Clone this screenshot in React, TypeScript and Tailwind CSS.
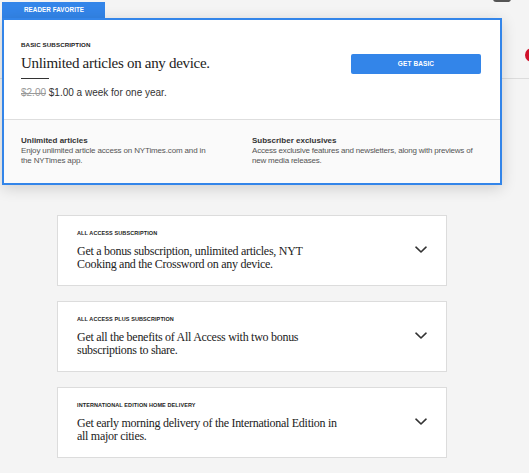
import React from "react";

const serif = { fontFamily: '"Liberation Serif", "Times New Roman", serif' };

function Chevron() {
  return (
    <svg width="12" height="8" viewBox="0 0 12 8" fill="none">
      <path d="M1 1.2 L6 6 L11 1.2" stroke="#333" strokeWidth="1.6" strokeLinecap="round" strokeLinejoin="round" />
    </svg>
  );
}

function Plan({ label, lines }: { label: string; lines: string[] }) {
  return (
    <div className="h-[71px] bg-white border border-[#dcdcdc] flex items-center justify-between pl-[19px] pr-[19px]">
      <div className="flex flex-col self-start pt-[13px]">
        <div className="text-[5.5px] leading-[8px] font-bold tracking-[0.1px] text-[#222] uppercase">{label}</div>
        <div className="mt-[8px] text-[12px] leading-[13px] text-[#222] tracking-[-0.28px]" style={serif}>
          {lines.map((l, i) => (
            <div key={i}>{l}</div>
          ))}
        </div>
      </div>
      <div className="-mt-[2px]">
        <Chevron />
      </div>
    </div>
  );
}

export default function App() {
  return (
    <div
      className="relative w-[529px] h-[473px] overflow-hidden bg-[#f4f4f4] text-[#333]"
      style={{ fontFamily: '"Liberation Sans", Arial, sans-serif' }}
    >
      {/* background page elements behind the card */}
      <div className="absolute left-0 right-0 top-[78px] h-px bg-[#dcdcdc]" />
      <div className="absolute left-[525px] top-[48px] w-[14px] h-[14px] rounded-full bg-[#d0112b]" />
      <div className="absolute left-[493px] -top-[4px] w-[18px] h-[6px] rounded-full bg-[#555]" />

      <div className="relative pt-[2px] pl-[2px]">
        <div className="w-[103px] h-[16px] bg-[#3385e9] text-white text-[6.3px] font-bold flex items-center pl-[22px] tracking-[0.05px]">
          READER FAVORITE
        </div>
        <div className="w-[500px] h-[167px] border-2 border-[#3385e9] bg-white shadow-[0_3px_14px_rgba(0,0,0,0.16)] flex flex-col">
          <div className="h-[100px] flex justify-between pl-[17px] pr-[19px] border-b border-[#dedede]">
            <div className="pt-[21px]">
              <div className="text-[6.2px] leading-[8px] font-bold text-[#222] tracking-[0.1px]">BASIC SUBSCRIPTION</div>
              <div className="mt-[4px] text-[15px] leading-[20px] text-[#222] tracking-[-0.3px]" style={serif}>
                Unlimited articles on any device.
              </div>
              <div className="mt-[5px] w-[28px] h-px bg-[#333]" />
              <div className="mt-[8px] text-[10px] leading-[12px] text-[#333]">
                <span className="line-through text-[#999]">$2.00</span> $1.00 a week for one year.
              </div>
            </div>
            <div className="pt-[34px]">
              <div className="w-[130px] h-[20px] rounded-[2px] bg-[#3385e9] text-white text-[6.5px] font-bold flex items-center justify-center tracking-[0.1px]">
                GET BASIC
              </div>
            </div>
          </div>
          <div className="flex-1 bg-[#fafafa] flex pl-[17px] pt-[16px]">
            <div className="w-[231px]">
              <div className="text-[8px] leading-[10px] font-bold text-[#333]">Unlimited articles</div>
              <div className="text-[8px] leading-[10px] text-[#555] w-[188px] tracking-[-0.15px]">
                Enjoy unlimited article access on NYTimes.com and in the NYTimes app.
              </div>
            </div>
            <div className="w-[235px]">
              <div className="text-[8px] leading-[10px] font-bold text-[#333]">Subscriber exclusives</div>
              <div className="text-[8px] leading-[10px] text-[#555] tracking-[-0.2px]">
                Access exclusive features and newsletters, along with previews of new media releases.
              </div>
            </div>
          </div>
        </div>
      </div>

      <div className="ml-[57px] mt-[30px] w-[390px] flex flex-col gap-[15px]">
        <Plan
          label="All Access Subscription"
          lines={["Get a bonus subscription, unlimited articles, NYT", "Cooking and the Crossword on any device."]}
        />
        <Plan
          label="All Access Plus Subscription"
          lines={["Get all the benefits of All Access with two bonus", "subscriptions to share."]}
        />
        <Plan
          label="International Edition Home Delivery"
          lines={["Get early morning delivery of the International Edition in", "all major cities."]}
        />
      </div>
    </div>
  );
}
